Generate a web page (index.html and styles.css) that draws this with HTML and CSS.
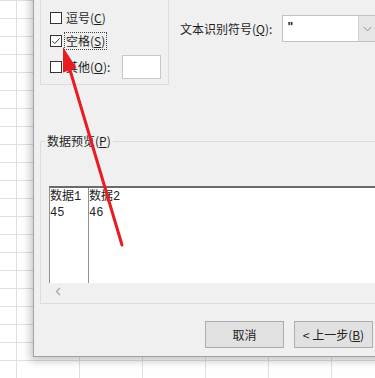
FILE: index.html
```html
<!DOCTYPE html>
<html lang="zh-CN">
<head>
<meta charset="utf-8">
<title>文本导入向导</title>
<link rel="stylesheet" href="styles.css">
</head>
<body>
<div class="dialog">
  <div class="top">
    <div class="delims">
      <div class="row first"><span class="cb"></span><span class="lbl">分号(<u>M</u>)</span></div>
      <div class="row"><span class="cb"></span><span class="lbl">逗号(<u>C</u>)</span></div>
      <div class="row"><span class="cb"><svg viewBox="0 0 12 12" width="10" height="10"><polyline points="1.5,6 4.5,9 10.5,2.5" fill="none" stroke="#444" stroke-width="1.2"/></svg></span><span class="lbl focus">空格(<u>S</u>)</span></div>
      <div class="row other"><span class="cb"></span><span class="lbl">其他(<u>O</u>):</span><span class="tb"></span></div>
    </div>
    <div class="qual">
      <span class="qlbl">文本识别符号(<u>Q</u>):</span>
      <div class="combo"><span class="cval">"</span><span class="cbtn"><svg viewBox="0 0 10 6" width="9" height="6"><polyline points="1,1 5,5 9,1" fill="none" stroke="#8a8a8a" stroke-width="1.1"/></svg></span></div>
    </div>
  </div>
  <fieldset class="preview">
    <legend>数据预览(<u>P</u>)</legend>
    <div class="pbox">
      <div class="col c1"><div>数据1</div><div>45</div></div>
      <div class="col c2"><div>数据2</div><div>46</div></div>
    </div>
    <div class="hscroll"><svg viewBox="0 0 6 9" width="6" height="9"><polyline points="5,1 1.5,4.5 5,8" fill="none" stroke="#a8a8a8" stroke-width="1.4"/></svg></div>
  </fieldset>
  <div class="buttons">
    <button class="btn">取消</button>
    <button class="btn">&lt; 上一步(<u>B</u>)</button>
  </div>
</div>
<svg class="arrow" viewBox="0 0 375 378" width="375" height="378">
  <line x1="69.7" y1="69" x2="122" y2="245" stroke="#e81c22" stroke-width="3" stroke-linecap="round"/>
  <polygon points="63,47 76.5,68 63,72.5" fill="#e81c22"/>
</svg>
</body>
</html>
```

FILE: styles.css
```css
html, body {
  margin: 0;
  padding: 0;
}
body {
  width: 375px;
  height: 378px;
  overflow: hidden;
  position: relative;
  background-color: #ffffff;
  background-image:
    linear-gradient(to right, #e0e0e0 1px, transparent 1px),
    linear-gradient(to bottom, #e0e0e0 1px, transparent 1px);
  background-size: 63px 100%, 100% 18px;
  background-position: 16px 0, 0 0;
  font-family: "Noto Sans CJK SC", "Noto Sans", sans-serif;
  font-size: 12px;
  color: #1e1e1e;
}
u { text-decoration: underline; text-underline-offset: 1px; }

.dialog {
  position: absolute;
  left: 33px;
  top: -20px;
  width: 380px;
  box-sizing: border-box;
  background: #f0f0f0;
  border: 1px solid #a3a3a3;
  padding: 0 0 8px 6px;
  box-shadow: -3px 4px 8px rgba(0, 0, 0, 0.22);
}

.top {
  display: flex;
  align-items: flex-start;
}
.delims {
  width: 129px;
  box-sizing: border-box;
  border: 1px solid #dcdcdc;
  padding: 1px 7px 3px 9px;
}
.row {
  height: 23px;
  box-sizing: border-box;
  display: flex;
  align-items: center;
}
.row.first { padding-bottom: 6px; }
.row.other { height: 29px; }
.cb {
  width: 12px;
  height: 12px;
  box-sizing: border-box;
  border: 1px solid #333;
  background: #fff;
  display: flex;
  align-items: center;
  justify-content: center;
  flex: none;
}
.lbl {
  margin-left: 2px;
  padding: 0 1px;
  line-height: 16px;
  border: 1px dotted transparent;
  white-space: nowrap;
}
.lbl.focus { border-color: #444; }
.tb {
  margin-left: auto;
  width: 39px;
  height: 24px;
  box-sizing: border-box;
  background: #fff;
  border: 1px solid #c8c8c8;
}

.qual {
  margin-left: 11px;
  padding-top: 34px;
  display: flex;
  align-items: center;
}
.qlbl { white-space: nowrap; line-height: 16px; }
.combo {
  margin-left: 10px;
  width: 95px;
  height: 27px;
  box-sizing: border-box;
  border: 1px solid #c2c2c2;
  background: #fff;
  display: flex;
}
.cval {
  flex: 1;
  padding: 3px 0 0 4px;
  line-height: 16px;
  font-family: "Liberation Sans", sans-serif;
  font-size: 12px;
  font-weight: bold;
  color: #222;
}
.cbtn {
  width: 17px;
  background: #e6e6e6;
  border-left: 1px solid #d2d2d2;
  display: flex;
  align-items: center;
  justify-content: center;
}

.preview {
  margin: 48px 0 0 0;
  padding: 37px 0 3px 0;
  min-width: 0;
  border: 1px solid #dcdcdc;
  border-right: none;
}
.preview legend {
  margin-left: 4px;
  padding: 0 2px;
  line-height: 16px;
}
.pbox {
  margin-left: 8px;
  height: 97px;
  box-sizing: border-box;
  border-top: 2px solid #6a6a6a;
  background: #fff;
  display: flex;
}
.col {
  padding-top: 1px;
  font-family: "Liberation Mono", "Noto Sans CJK SC", monospace;
  font-size: 12px;
  line-height: 16px;
  color: #222;
}
.c1 {
  width: 40px;
  box-sizing: border-box;
  border-left: 1px solid #909090;
  border-right: 1px solid #909090;
}
.hscroll {
  margin-left: 8px;
  height: 17px;
  padding-left: 6px;
  display: flex;
  align-items: center;
}

.buttons {
  margin-top: 17px;
  padding-left: 165px;
  display: flex;
  gap: 10px;
}
.btn {
  width: 79px;
  height: 27px;
  box-sizing: border-box;
  background: #e1e1e1;
  border: 1px solid #adadad;
  font-family: "Noto Sans CJK SC", "Noto Sans", sans-serif;
  font-size: 12px;
  color: #222;
  padding: 0;
  white-space: nowrap;
}

.arrow {
  position: absolute;
  left: 0;
  top: 0;
  pointer-events: none;
}
```
